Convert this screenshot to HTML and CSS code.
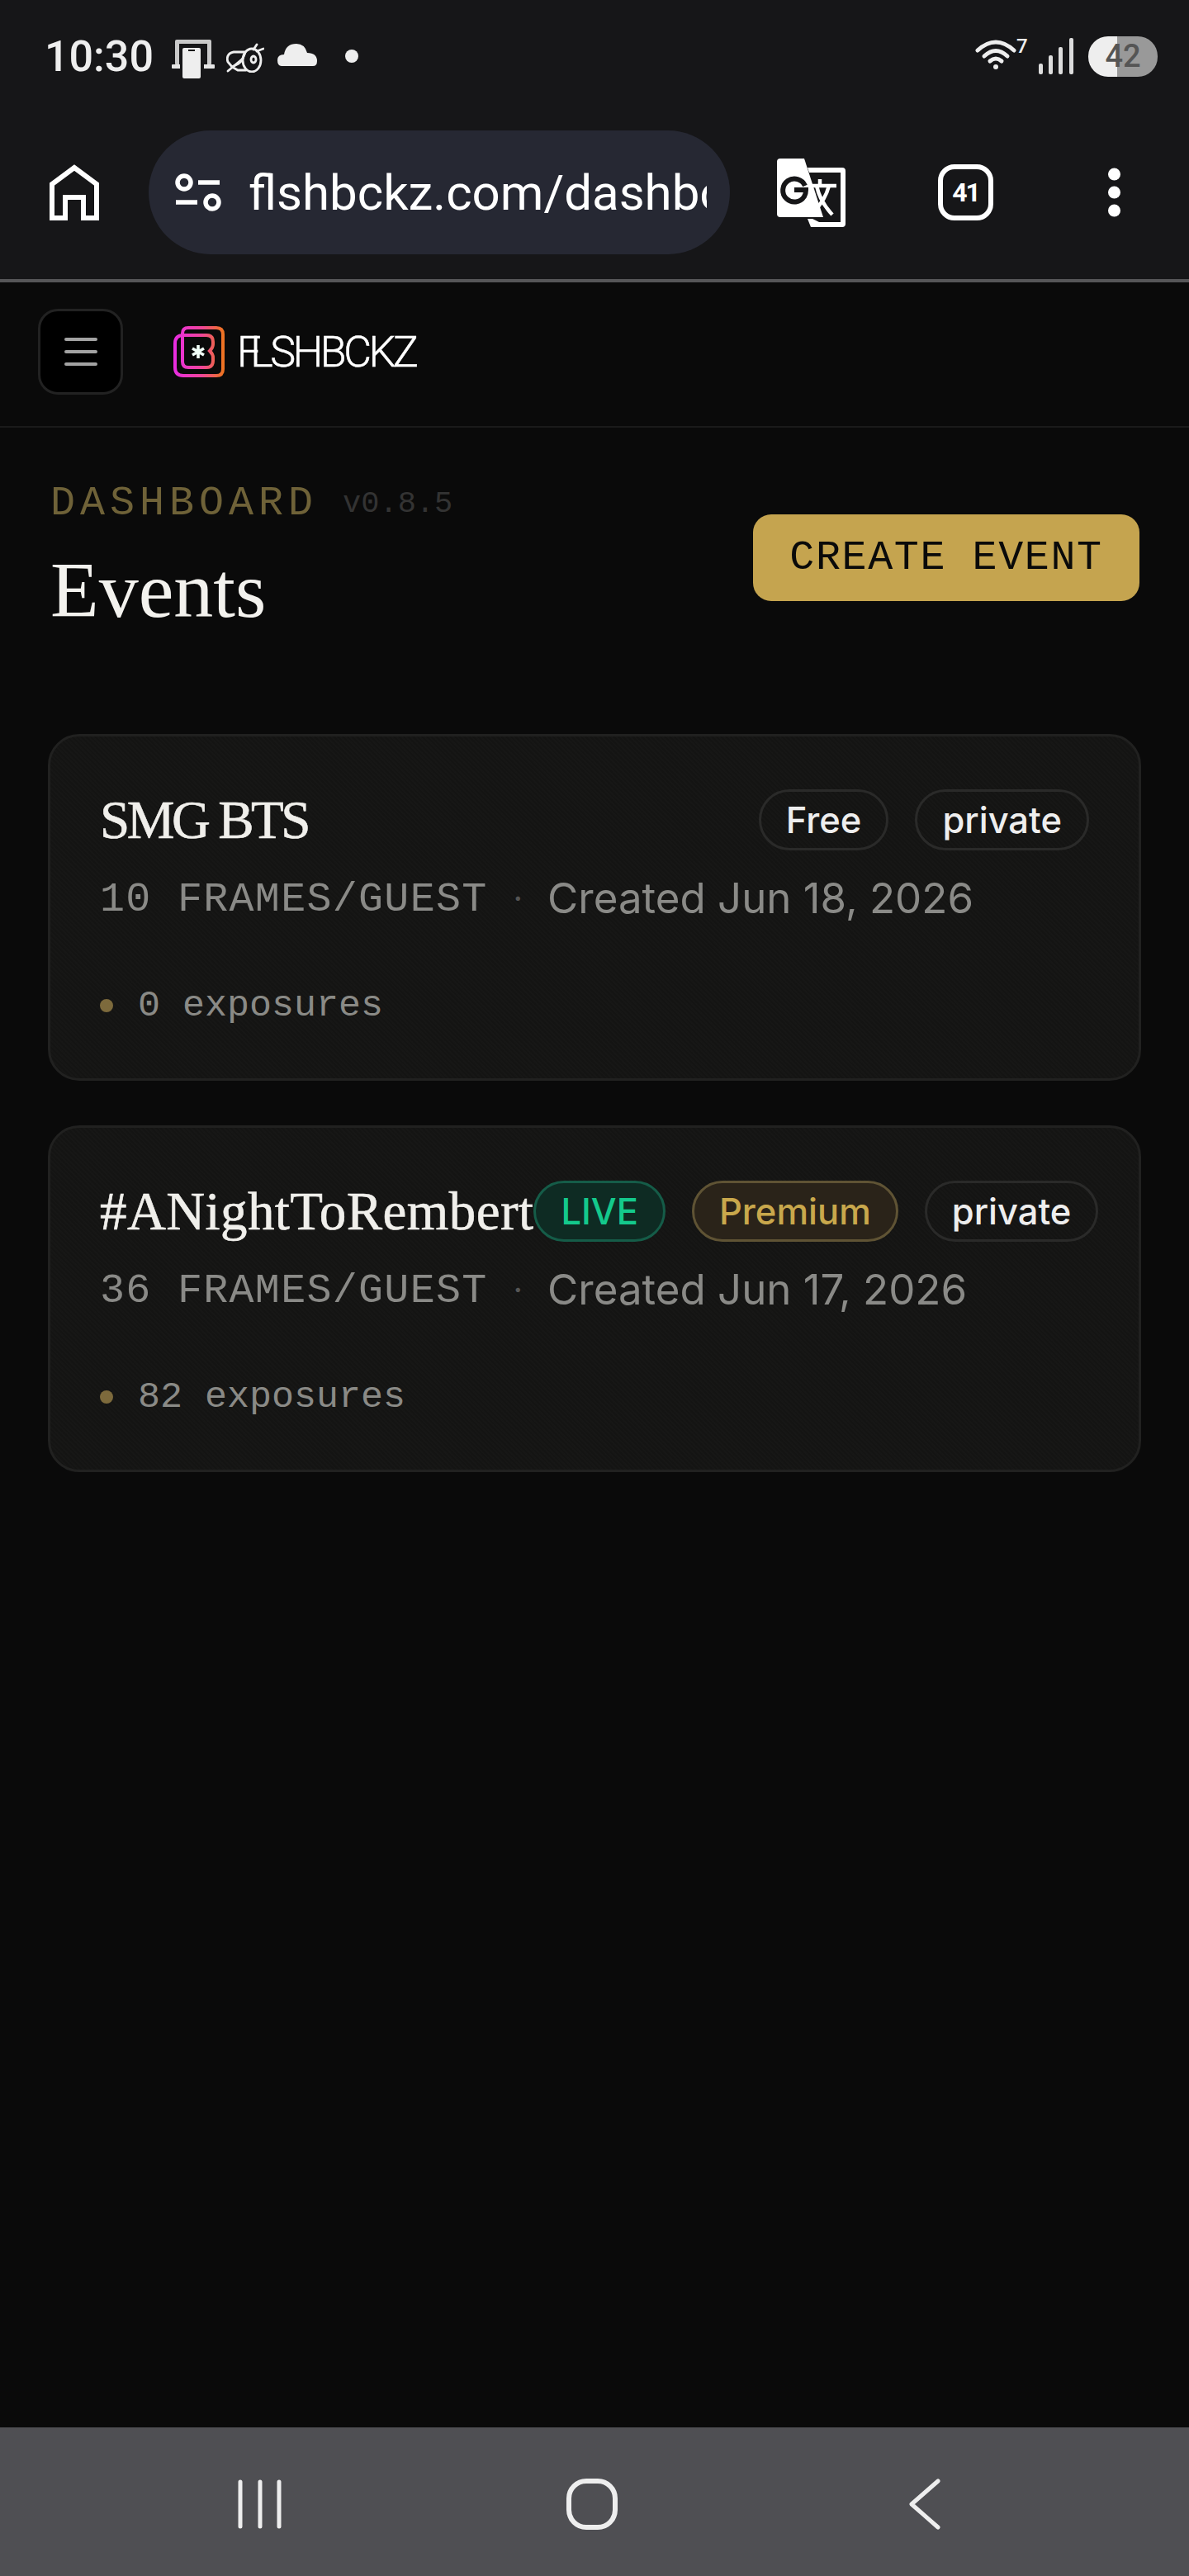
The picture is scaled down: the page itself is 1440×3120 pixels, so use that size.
FILE: index.html
```html
<!DOCTYPE html>
<html lang="en">
<head>
    <meta charset="UTF-8">
    <meta name="viewport" content="width=device-width, initial-scale=1.0">
    <title>Events - FLSHBCKZ</title>
    <link rel="stylesheet" href="styles.css">
</head>
<body>
    <div class="phone">
        <!-- Android status bar and browser toolbar -->
        <div class="chrome">
            <div class="status-bar">
                <span class="time">10:30</span>
                <svg class="st-phone" width="52" height="47" viewBox="0 0 52 47">
                    <rect x="4" y="0" width="44" height="31" rx="2" fill="#c9c9c9"/>
                    <rect x="9" y="5" width="34" height="26" fill="#161618"/>
                    <rect x="0" y="30" width="52" height="5" rx="1" fill="#e6e6e6"/>
                    <rect x="10" y="7" width="29" height="40" fill="#161618"/>
                    <rect x="13" y="10" width="22" height="37" rx="2" fill="#eeeeee"/>
                    <rect x="20" y="12" width="8" height="2" fill="#161618"/>
                </svg>
                <svg class="st-bee" width="46" height="36" viewBox="0 0 46 36" fill="none" stroke="#eeeeee" stroke-width="2.8" stroke-linecap="round">
                    <ellipse cx="31" cy="21" rx="11" ry="14"/>
                    <ellipse cx="33" cy="20" rx="3" ry="4"/>
                    <path d="M23 11 H9 C2 12 0 18 2 23 L7 29 L15 25 C19 22 21 18 23 11 Z"/>
                    <path d="M2 34 L20 19 M7 29 L14 33 H24"/>
                    <path d="M33 8 L37 2 M37 10 L45 7"/>
                </svg>
                <svg class="st-cloud" width="48" height="27" viewBox="0 0 48 27">
                    <path d="M5 27 Q0 27 0 20 Q0 13 8 13 Q10 0 23 0 Q33 0 36 11 Q48 11 48 21 Q48 27 43 27 Z" fill="#eeeeee"/>
                </svg>
                <span class="st-dot"></span>
                <svg class="st-wifi" width="50" height="40" viewBox="0 0 50 40" fill="none" stroke="#eeeeee" stroke-width="5" stroke-linecap="round">
                    <path d="M3 16 Q25 -4 47 16"/>
                    <path d="M11 23 Q25 10 39 23"/>
                    <path d="M18 29 Q25 23 32 29"/>
                    <circle cx="25" cy="36" r="3" fill="#eeeeee" stroke="none"/>
                </svg>
                <span class="wifi-seven">7</span>
                <svg class="st-signal" width="42" height="44" viewBox="0 0 42 44" fill="#dddddd">
                    <rect x="0" y="31" width="5" height="13" rx="2"/>
                    <rect x="12" y="21" width="5" height="23" rx="2"/>
                    <rect x="24" y="11" width="5" height="33" rx="2"/>
                    <rect x="37" y="0" width="5" height="44" rx="2"/>
                </svg>
                <span class="battery">42</span>
            </div>
            <div class="toolbar">
                <svg class="tb-home" width="60" height="68" viewBox="0 0 60 68" fill="none" stroke="#ffffff" stroke-width="6">
                    <path d="M3 65 V24 L30 4 L57 24 V65 H41 V40 H19 V65 Z"/>
                </svg>
                <div class="url-pill">
                    <svg class="tune" width="57" height="48" viewBox="0 0 57 48" fill="none" stroke="#ffffff" stroke-width="5.5">
                        <circle cx="11" cy="12" r="8"/>
                        <path d="M28 12 H54"/>
                        <path d="M1 36 H27"/>
                        <circle cx="45" cy="36" r="8"/>
                    </svg>
                    <div class="url-text">flshbckz.com/dashbo</div>
                </div>
                <svg class="tb-translate" width="83" height="83" viewBox="0 0 83 83">
                    <path fill-rule="evenodd" fill="#ffffff" d="M37 11 H79 Q83 11 83 15 V79 Q83 83 79 83 H41 L37 73 H43 L51 77 H77 V17 H39 Z"/>
                    <path fill="#ffffff" d="M4 0 H33 L56 71 H4 Q0 71 0 67 V4 Q0 0 4 0 Z"/>
                    <path d="M34 33 A14 14 0 1 0 33 46 Q35 43 35 38 H21" fill="none" stroke="#161618" stroke-width="6"/>
                    <path d="M40 33 H72 M52 25 V33 M48 33 Q52 52 67 68 M63 33 Q58 52 44 64" fill="none" stroke="#ffffff" stroke-width="4.5"/>
                </svg>
                <div class="tab-count">41</div>
                <svg class="tb-menu" width="15" height="60" viewBox="0 0 15 60" fill="#ffffff">
                    <circle cx="7.5" cy="8" r="7.5"/>
                    <circle cx="7.5" cy="30" r="7.5"/>
                    <circle cx="7.5" cy="52" r="7.5"/>
                </svg>
            </div>
        </div>

        <!-- App header -->
        <header class="app-header">
            <button class="menu-btn">
                <span></span>
                <span></span>
                <span></span>
            </button>
            <svg class="logo-mark" width="62" height="62" viewBox="0 0 62 62" fill="none">
                <defs>
                    <linearGradient id="logoGrad" x1="0" y1="0" x2="1" y2="0">
                        <stop offset="0" stop-color="#e92de0"/>
                        <stop offset="0.55" stop-color="#f0459a"/>
                        <stop offset="1" stop-color="#ee7322"/>
                    </linearGradient>
                </defs>
                <path stroke="url(#logoGrad)" stroke-width="4" d="M11 32 V9 Q11 2 18 2 H52 Q60 2 60 10 V52 Q60 60 52 60 H12 Q2 60 2 50 V21 Q2 11 12 11 H40 Q48 11 48 19 V22 Q48 26 44 30 Q48 34 48 38 V42 Q48 50 40 50 H18 Q11 50 11 43 V32"/>
                <path stroke="#f2fff8" stroke-width="3.6" d="M30 23 V39 M23 27 L37 35 M23 35 L37 27"/>
            </svg>
            <div class="logo-text"><span class="logo-f">F</span>LSHBCKZ</div>
        </header>

        <main class="content">
            <section class="page-head">
                <div>
                    <div class="eyebrow">
                        <span class="eyebrow-label">DASHBOARD</span>
                        <span class="version">v0.8.5</span>
                    </div>
                    <h1>Events</h1>
                </div>
                <button class="create-btn">CREATE EVENT</button>
            </section>

            <article class="event-card">
                <div class="event-top">
                    <h2 class="event-title caps">SMG BTS</h2>
                    <div class="badges">
                        <span class="badge">Free</span>
                        <span class="badge">private</span>
                    </div>
                </div>
                <div class="event-meta">
                    <span class="frames">10 FRAMES/GUEST</span>
                    <span class="sep">·</span>
                    <span class="created">Created Jun 18, 2026</span>
                </div>
                <div class="exposures"><span class="exp-dot"></span>0 exposures</div>
            </article>

            <article class="event-card">
                <div class="event-top">
                    <h2 class="event-title">#ANightToRembert</h2>
                    <div class="badges">
                        <span class="badge live">LIVE</span>
                        <span class="badge premium">Premium</span>
                        <span class="badge">private</span>
                    </div>
                </div>
                <div class="event-meta">
                    <span class="frames">36 FRAMES/GUEST</span>
                    <span class="sep">·</span>
                    <span class="created">Created Jun 17, 2026</span>
                </div>
                <div class="exposures"><span class="exp-dot"></span>82 exposures</div>
            </article>
        </main>

        <!-- Android navigation bar -->
        <nav class="nav-bar">
            <svg class="nav-recents" width="54" height="60" viewBox="0 0 54 60" fill="none" stroke="#eeeeee" stroke-width="5" stroke-linecap="round">
                <path d="M3 3 V57 M27 3 V57 M50 3 V57"/>
            </svg>
            <svg class="nav-home" width="62" height="62" viewBox="0 0 62 62" fill="none" stroke="#eeeeee" stroke-width="6">
                <rect x="3" y="3" width="56" height="56" rx="21"/>
            </svg>
            <svg class="nav-back" width="38" height="62" viewBox="0 0 38 62" fill="none" stroke="#eeeeee" stroke-width="5" stroke-linecap="round" stroke-linejoin="round">
                <path d="M35 3 L3 31 L35 59"/>
            </svg>
        </nav>
    </div>
</body>
</html>
```

FILE: styles.css
```css
* {
    margin: 0;
    padding: 0;
    box-sizing: border-box;
}

body {
    background-color: #0a0a0a;
    font-family: 'Inter', sans-serif;
    overflow: hidden;
}

svg {
    display: block;
    flex-shrink: 0;
}

.phone {
    display: flex;
    flex-direction: column;
    width: 1440px;
    height: 3120px;
}

/* Status bar + browser toolbar */
.chrome {
    height: 342px;
    padding-top: 38px;
    background-color: #161618;
    border-bottom: 4px solid #565658;
}

.status-bar {
    display: flex;
    align-items: center;
    height: 60px;
    padding: 0 38px 0 54px;
}

.time {
    font-family: 'Roboto', sans-serif;
    font-size: 52px;
    font-weight: 500;
    color: #eeeeee;
    margin-right: 22px;
}

.st-phone {
    margin-top: 6px;
    margin-right: 14px;
}

.st-bee {
    margin-top: 3px;
    margin-right: 16px;
}

.st-cloud {
    margin-top: -3px;
    margin-right: 34px;
}

.st-dot {
    width: 16px;
    height: 16px;
    border-radius: 50%;
    background-color: #eeeeee;
}

.st-wifi {
    margin-left: auto;
    margin-top: -6px;
}

.wifi-seven {
    width: 27px;
    margin-bottom: 24px;
    font-family: 'Roboto', sans-serif;
    font-size: 24px;
    font-weight: 500;
    line-height: 24px;
    color: #eeeeee;
}

.st-signal {
    margin-right: 18px;
}

.battery {
    display: flex;
    justify-content: center;
    align-items: center;
    width: 84px;
    height: 49px;
    border-radius: 24px;
    background: linear-gradient(90deg, #eeeeee 42%, #999999 42%);
    font-family: 'Roboto', sans-serif;
    font-size: 38px;
    font-weight: 500;
    color: #555555;
}

.toolbar {
    display: flex;
    align-items: center;
    height: 150px;
    margin-top: 60px;
    padding-left: 60px;
}

.url-pill {
    display: flex;
    align-items: center;
    width: 704px;
    height: 150px;
    margin-left: 60px;
    padding-left: 32px;
    border-radius: 75px;
    background-color: #262833;
}

.tune {
    margin-right: 32px;
}

.url-text {
    width: 555px;
    overflow: hidden;
    white-space: nowrap;
    font-family: 'Roboto', sans-serif;
    font-size: 60px;
    color: #ffffff;
}

.tb-translate {
    margin-left: 57px;
}

.tab-count {
    display: flex;
    justify-content: center;
    align-items: center;
    width: 67px;
    height: 68px;
    margin-left: 112px;
    border: 6px solid #ffffff;
    border-radius: 20px;
    font-family: 'Roboto', sans-serif;
    font-size: 32px;
    font-weight: 700;
    letter-spacing: -2px;
    color: #ffffff;
}

.tb-menu {
    margin-left: 139px;
}

/* App header */
.app-header {
    display: flex;
    align-items: center;
    height: 176px;
    padding: 0 0 6px 46px;
    border-bottom: 2px solid #1a1a1a;
}

.menu-btn {
    display: flex;
    flex-direction: column;
    justify-content: center;
    align-items: center;
    gap: 11px;
    width: 103px;
    height: 104px;
    background-color: #000000;
    border: 3px solid #222222;
    border-radius: 24px;
}

.menu-btn span {
    width: 40px;
    height: 4px;
    border-radius: 2px;
    background-color: #a3a3a3;
}

.logo-mark {
    margin-left: 61px;
    margin-right: 15px;
}

.logo-text {
    font-family: 'Roboto', sans-serif;
    font-size: 52px;
    font-weight: 300;
    letter-spacing: -3.5px;
    -webkit-text-stroke: 0.5px #ffffff;
    color: #ffffff;
}

.logo-f {
    letter-spacing: -13px;
}

/* Page */
.content {
    flex: 1;
    padding: 0 58px;
}

.page-head {
    display: flex;
    justify-content: space-between;
    align-items: flex-start;
    padding: 67px 2px 119px 3px;
}

.eyebrow {
    display: flex;
    align-items: center;
    font-family: 'Liberation Mono', monospace;
    line-height: 50px;
}

.eyebrow-label {
    font-size: 50px;
    letter-spacing: 6px;
    color: #6f6238;
}

.version {
    margin-left: 30px;
    font-size: 37px;
    color: #333333;
}

h1 {
    margin-top: 25px;
    font-family: 'Liberation Serif', serif;
    font-size: 96px;
    font-weight: 400;
    line-height: 110px;
    color: #f3f2ee;
}

.create-btn {
    height: 105px;
    width: 468px;
    margin-top: 38px;
    border: none;
    border-radius: 22px;
    background-color: #c5a44f;
    font-family: 'Liberation Mono', monospace;
    font-size: 50px;
    letter-spacing: 1.6px;
    color: #0a0a0a;
}

.event-card {
    margin-bottom: 54px;
    padding: 64px 60px 63px;
    border: 3px solid #212120;
    border-radius: 38px;
    background-color: #141413;
    background-image: repeating-linear-gradient(45deg, rgba(255, 255, 255, 0.01) 0 2px, transparent 2px 4px);
}

.event-top {
    display: flex;
    justify-content: space-between;
    align-items: center;
    height: 74px;
}

.event-title {
    flex-shrink: 0;
    white-space: nowrap;
    font-family: 'Liberation Serif', serif;
    font-size: 65px;
    font-weight: 400;
    letter-spacing: 0.4px;
    -webkit-text-stroke: 0.6px #f0efeb;
    color: #f0efeb;
}

.event-title.caps {
    letter-spacing: -3.5px;
}

.badges {
    display: flex;
    flex-shrink: 0;
    gap: 32px;
}

.badge {
    display: flex;
    align-items: center;
    height: 74px;
    padding: 0 30px;
    border: 3px solid #2a2a29;
    border-radius: 37px;
    font-size: 43.5px;
    font-weight: 500;
    color: #eeeeee;
}

.badge.live {
    background-color: #0e2b23;
    border-color: #155c48;
    color: #14c98c;
}

.badge.premium {
    background-color: #2a2319;
    border-color: #5f5334;
    color: #c9a84c;
}

.event-meta {
    display: flex;
    align-items: center;
    height: 60px;
    margin-top: 27px;
    color: #8a8a87;
}

.frames {
    margin-top: 4px;
    font-family: 'Liberation Mono', monospace;
    font-size: 50px;
    letter-spacing: 1.3px;
}

.sep {
    margin: 0 30px 0 31px;
    font-size: 40px;
    color: #555555;
}

.created {
    font-size: 51px;
}

.exposures {
    display: flex;
    align-items: center;
    height: 50px;
    margin-top: 76px;
    font-family: 'Liberation Mono', monospace;
    font-size: 45px;
    color: #8a8a86;
}

.exp-dot {
    width: 16px;
    height: 16px;
    margin-right: 30px;
    border-radius: 50%;
    background-color: #7d6a3c;
}

/* Android nav */
.nav-bar {
    display: flex;
    align-items: center;
    height: 180px;
    padding: 6px 0 0 288px;
    background-color: #4f4f53;
}

.nav-home {
    margin-left: 344px;
}

.nav-back {
    margin-left: 353px;
}
```
